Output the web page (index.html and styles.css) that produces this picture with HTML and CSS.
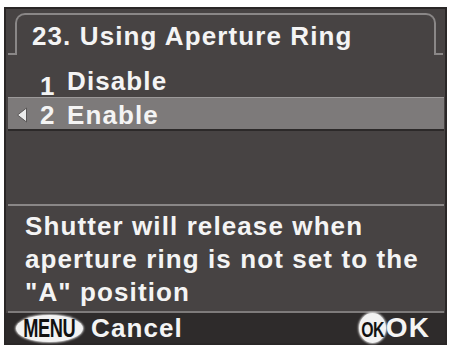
FILE: index.html
```html
<!DOCTYPE html>
<html>
<head>
<meta charset="utf-8">
<link rel="stylesheet" href="styles.css">
</head>
<body>
<div class="screen">
  <div class="header">
    <div class="foot"></div>
    <div class="tab"><span class="title">23. Using Aperture Ring</span></div>
    <div class="foot"></div>
  </div>
  <div class="list">
    <div class="row row-first">
      <span class="marker"></span>
      <span class="num num-low">1</span>
      <span class="label">Disable</span>
    </div>
    <div class="row row-selected">
      <span class="marker"><svg class="tri" width="12" height="16" viewBox="0 0 12 16"><polygon points="10.5,1 10.5,15 1.5,8" fill="#ececec" stroke="#5a5757" stroke-width="1"/></svg></span>
      <span class="num">2</span>
      <span class="label">Enable</span>
    </div>
  </div>
  <div class="spacer"></div>
  <div class="message">Shutter will release when<br>aperture ring is not set to the<br>"A" position</div>
  <div class="rule"></div>
  <div class="footer">
    <div class="group">
      <span class="menu-key"><span class="key-text">MENU</span></span>
      <span class="foot-label">Cancel</span>
    </div>
    <div class="group group-ok">
      <span class="ok-key"><span class="key-text key-ok">OK</span></span>
      <span class="foot-label">OK</span>
    </div>
  </div>
</div>
</body>
</html>
```
FILE: styles.css
```css
html, body {
  margin: 0;
  padding: 0;
  background: #ffffff;
}

body {
  font-family: "Liberation Sans", Arial, sans-serif;
  font-weight: bold;
  color: #f4f4f4;
}

.screen {
  margin: 7px 0 0 4px;
  width: 443px;
  height: 338px;
  box-sizing: border-box;
  border: 2px solid #2a2727;
  background: #474343;
  display: flex;
  flex-direction: column;
}

.header {
  display: flex;
  height: 46px;
  box-sizing: border-box;
  padding: 4px 2px 0 2px;
}

.foot {
  width: 7px;
  height: 2px;
  align-self: flex-end;
  background: #8a8787;
}

.tab {
  flex: 1;
  height: 42px;
  box-sizing: border-box;
  border: 2px solid #8a8787;
  border-bottom: none;
  border-radius: 10px 10px 0 0;
  padding: 6px 0 0 15px;
}

.title {
  display: block;
  font-size: 26px;
  line-height: 30px;
  letter-spacing: 1.1px;
}

.list {
  padding-top: 10px;
  height: 76px;
}

.row {
  display: flex;
  align-items: flex-start;
  height: 32px;
  box-sizing: border-box;
  margin: 0 1px 0 2px;
  padding-left: 8px;
  font-size: 26px;
  line-height: 28px;
  letter-spacing: 1.1px;
}

.row-first {
  padding-top: 2px;
}

.row-selected {
  height: 34px;
  padding-top: 3px;
  background: #7d7a7a;
  border-top: 1px solid #9c9999;
  border-bottom: 2px solid #2c2929;
}

.marker {
  width: 24px;
  height: 28px;
  display: flex;
  align-items: center;
}

.tri {
  display: block;
}

.num {
  width: 27px;
}

.num-low {
  padding-top: 5px;
}

.spacer {
  height: 67px;
  box-sizing: border-box;
  margin: 0 1px 0 2px;
  border-bottom: 2px solid #8a8787;
}

.message {
  height: 107px;
  box-sizing: border-box;
  padding: 4px 0 0 19px;
  font-size: 26px;
  line-height: 33px;
  letter-spacing: 1.1px;
}

.rule {
  height: 2px;
  margin: 0 1px 0 2px;
  background: #7e7b7b;
}

.footer {
  flex: 1;
  background: #2e2b2b;
  display: flex;
  align-items: center;
  justify-content: space-between;
  padding: 0 15px 0 10px;
}

.group {
  display: flex;
  align-items: center;
  gap: 8px;
}

.group-ok {
  gap: 0;
}

.foot-label {
  font-size: 26px;
  line-height: 30px;
  letter-spacing: 1.1px;
}

.group-ok .foot-label {
  font-size: 28px;
}

.menu-key {
  width: 67px;
  height: 27px;
  border-radius: 50%;
  background: #f2f2f2;
  box-shadow: 0 0 2px 1px rgba(255, 255, 255, 0.7);
  display: flex;
  align-items: center;
  justify-content: center;
}

.ok-key {
  width: 27px;
  height: 30px;
  border-radius: 50%;
  background: #f2f2f2;
  box-shadow: 0 0 2px 1px rgba(255, 255, 255, 0.7);
  display: flex;
  align-items: center;
  justify-content: center;
}

.key-text {
  display: inline-block;
  color: #111111;
  font-size: 26px;
  line-height: 26px;
  letter-spacing: -0.5px;
  transform: scaleX(0.7);
}

.key-ok {
  font-size: 22px;
  line-height: 22px;
  letter-spacing: -1px;
  transform: scaleX(0.72);
  margin-top: 4px;
}
```
